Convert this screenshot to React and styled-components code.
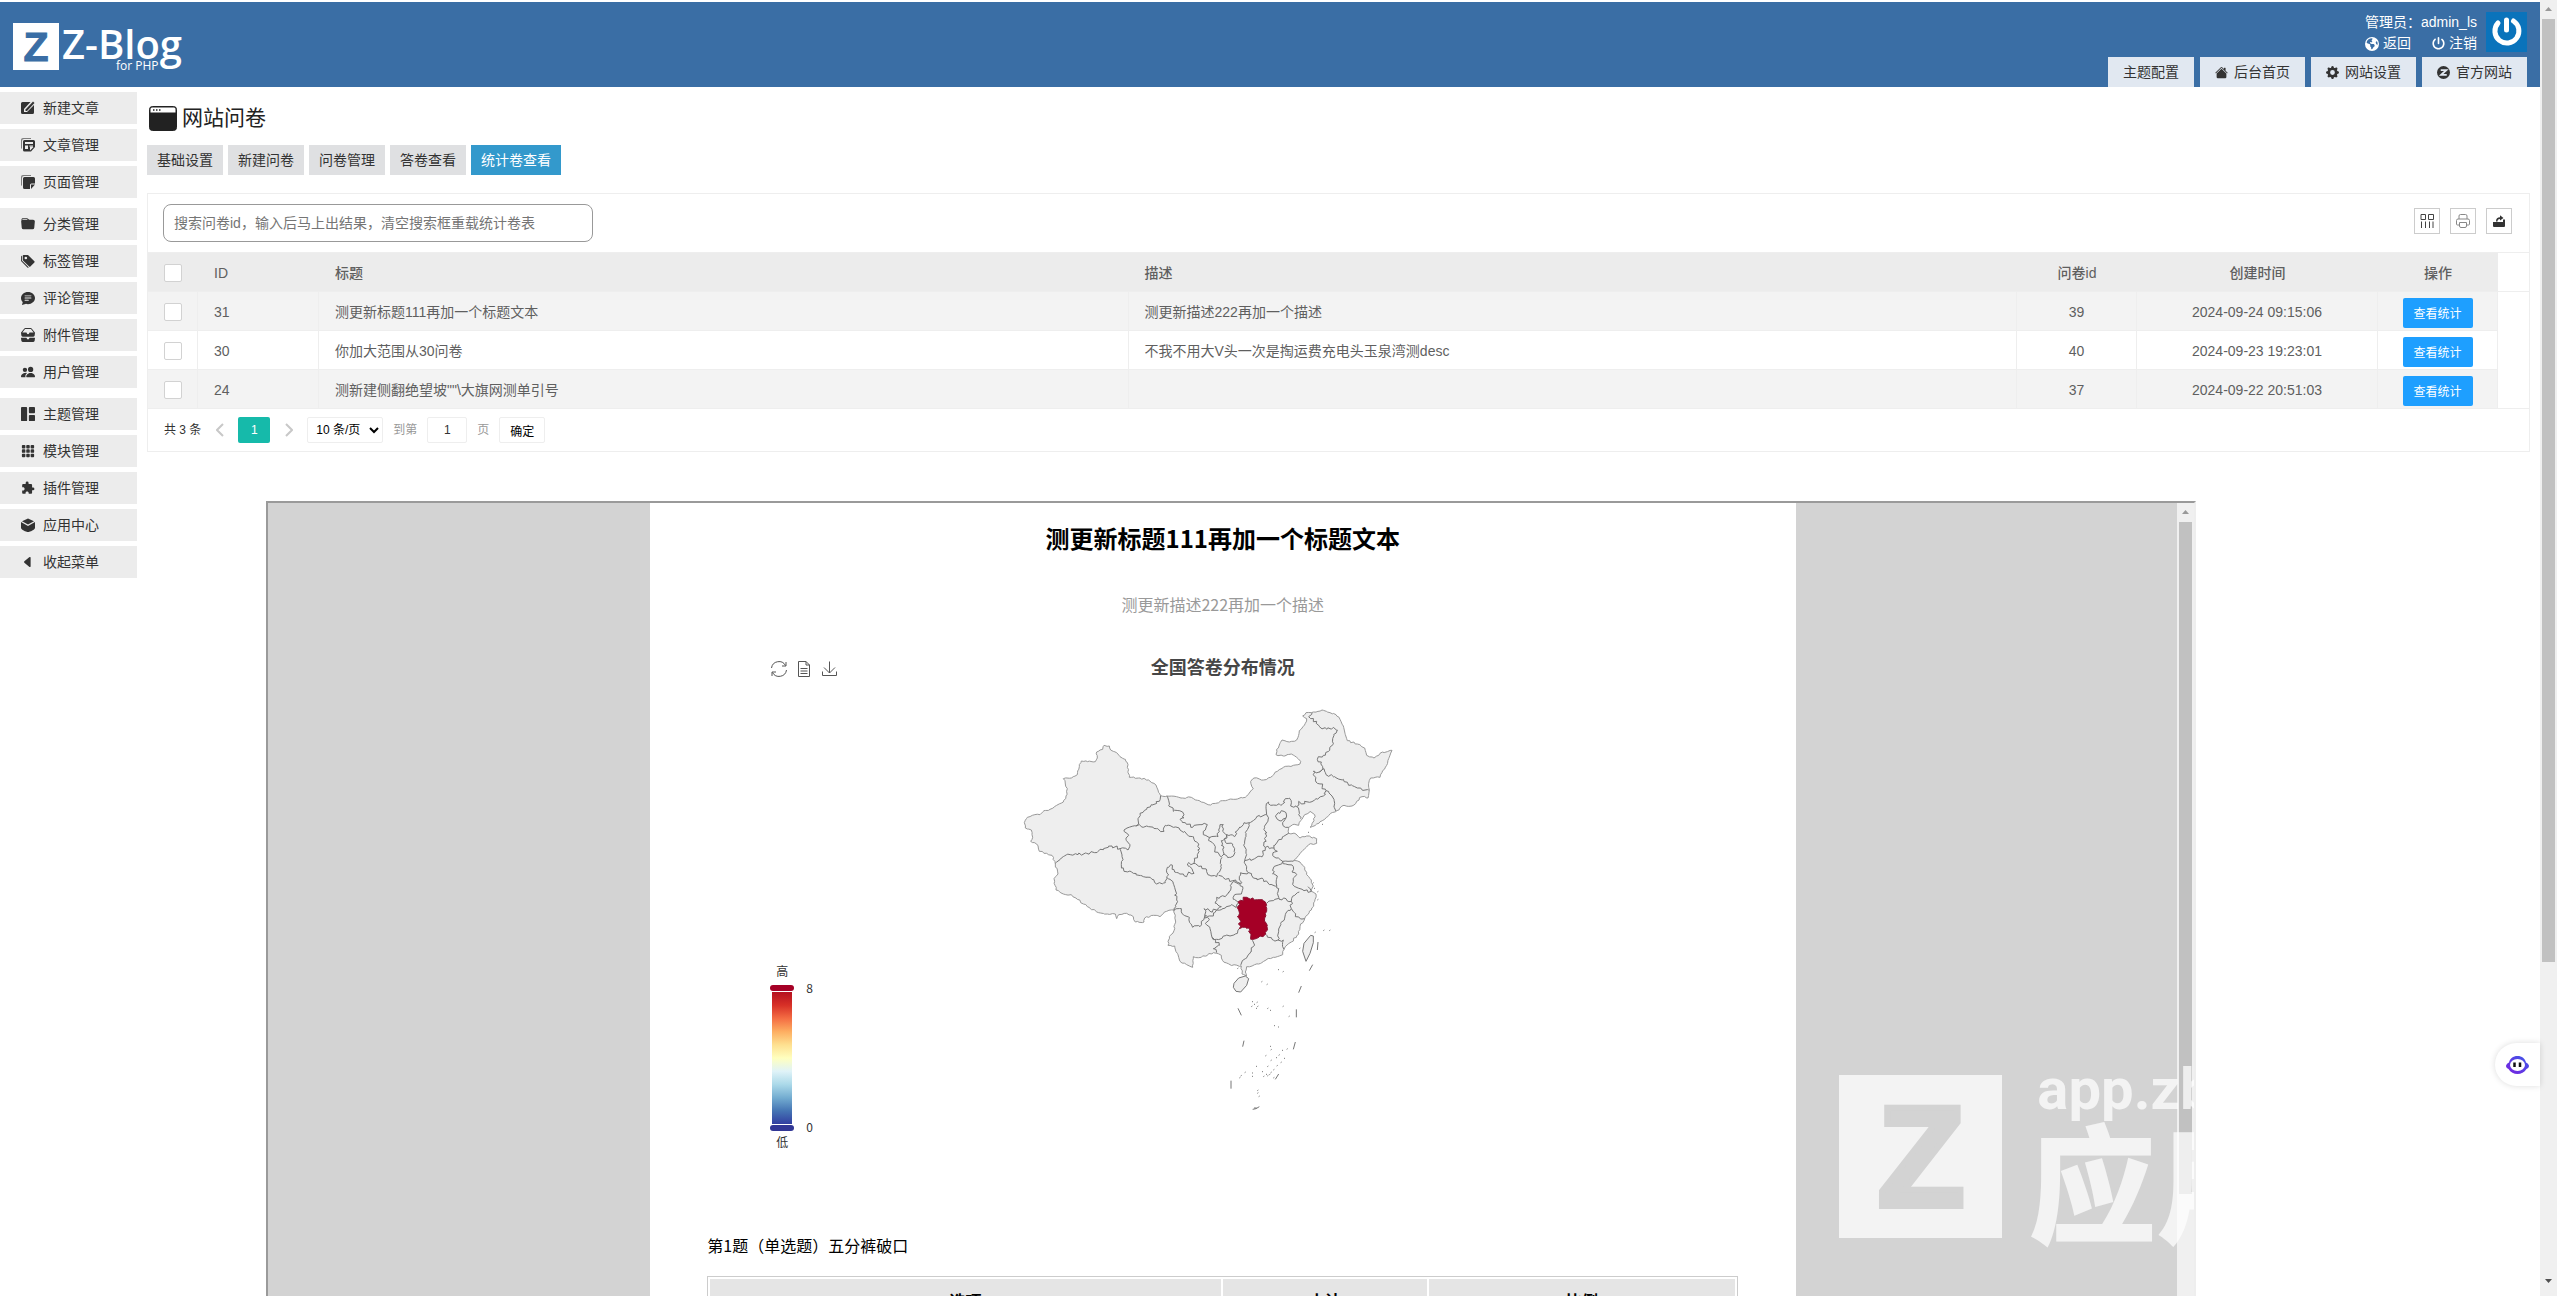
import React from 'react';
import styled, { createGlobalStyle } from 'styled-components';
import {
  BsCaretLeftFill,
  BsChatTextFill,
  BsFolderFill,
  BsGearFill,
  BsGrid1X2Fill,
  BsGrid3X3GapFill,
  BsHouseFill,
  BsInboxesFill,
  BsPeopleFill,
  BsStickyFill,
  BsTagsFill,
} from 'react-icons/bs';
import { FaEarthAmericas, FaPowerOff } from 'react-icons/fa6';
import { MdExtension } from 'react-icons/md';

const GlobalStyle = createGlobalStyle`
  * {
    box-sizing: border-box;
  }
  body {
    margin: 0;
    background: #fff;
    color: #333;
    font: 14px/20px "Liberation Sans", "Noto Sans CJK SC", sans-serif;
  }
  button, input, select {
    font-family: inherit;
  }
  svg {
    display: block;
    flex: none;
  }
`;

const Window = styled.div`
  display: flex;
  height: 100vh;
  overflow: hidden;
`;
const Page = styled.div`
  display: flex;
  flex-direction: column;
  flex: 1;
  min-width: 0;
  padding-top: 2px;
`;

/* scrollbars */
const Track = styled.div`
  flex: none;
  display: flex;
  flex-direction: column;
  justify-content: space-between;
  align-items: center;
  width: 17px;
  padding: 0 2px 5px;
  background: #f0f0f0;
`;
const Thumb = styled.div`
  width: 13px;
  height: ${(p) => p.$size};
  background: #c1c1c1;
`;
const Arrow = styled.svg`
  width: 7px;
  height: 4px;
  margin: 7px auto 8px;
  fill: ${(p) => p.$color};
`;

/* top bar */
const Header = styled.header`
  flex: none;
  display: flex;
  justify-content: space-between;
  height: 85px;
  padding: 0 13px;
  background: #3a6ea5;
`;
const Logo = styled.svg`
  width: 180px;
  height: 60px;
  margin-top: 15px;
`;
const HeaderRight = styled.div`
  display: flex;
  flex-direction: column;
  align-items: flex-end;
  justify-content: space-between;
`;
const User = styled.div`
  display: flex;
  gap: 9px;
  padding-top: 10px;
  color: #fff;
  line-height: 21px;
`;
const UserLinks = styled.div`
  display: flex;
  justify-content: space-between;
`;
const UserLink = styled.a`
  display: flex;
  align-items: center;
  gap: 4px;
  color: #fff;
  text-decoration: none;
`;
const Avatar = styled.svg`
  width: 41px;
  height: 40px;
`;
const TopMenu = styled.nav`
  display: flex;
  gap: 6px;
`;
const TopLink = styled.a`
  display: flex;
  align-items: center;
  gap: 6px;
  height: 30px;
  padding: 0 15px;
  background: #e1e8f1;
  color: #333;
  text-decoration: none;
`;

/* left menu */
const Body = styled.div`
  display: flex;
  flex: 1;
  min-height: 0;
`;
const Side = styled.nav`
  flex: none;
  width: 137px;
  padding-top: 5px;
`;
const SideGroup = styled.div`
  display: flex;
  flex-direction: column;
  gap: 5px;
  margin-bottom: 10px;
`;
const SideLink = styled.a`
  display: flex;
  align-items: center;
  gap: 8px;
  height: 32px;
  padding-left: 21px;
  background: #ececec;
  color: #333;
  text-decoration: none;
`;

/* main column */
const Main = styled.main`
  display: flex;
  flex-direction: column;
  flex: 1;
  min-width: 0;
  padding: 16px 10px 0;
`;
const PageTitle = styled.h2`
  display: flex;
  align-items: center;
  gap: 5px;
  margin: 0;
  padding-left: 2px;
  font-size: 21px;
  font-weight: 400;
  line-height: 30px;
  color: #222;
`;
const Tabs = styled.div`
  display: flex;
  gap: 5px;
  margin-top: 12px;
`;
const Tab = styled.a`
  padding: 0 10px;
  background: ${(p) => (p.$active ? '#3399cc' : '#dfe0e2')};
  color: ${(p) => (p.$active ? '#fff' : '#333')};
  line-height: 30px;
  text-decoration: none;
`;
const Panel = styled.section`
  margin-top: 18px;
  border: 1px solid #eee;
`;
const Tools = styled.div`
  display: flex;
  justify-content: space-between;
  align-items: center;
  height: 58px;
  padding: 0 17px 0 15px;
`;
const Search = styled.input`
  width: 430px;
  height: 38px;
  padding: 0 10px;
  border: 1px solid #999;
  border-radius: 8px;
  font-size: 14px;
  &::placeholder {
    color: #757575;
  }
`;
const ToolButtons = styled.div`
  display: flex;
  gap: 10px;
  margin-bottom: 5px;
`;
const ToolButton = styled.button`
  display: flex;
  align-items: center;
  justify-content: center;
  width: 26px;
  height: 26px;
  padding: 0;
  border: 1px solid #ccc;
  background: #fff;
`;

const Table = styled.table`
  width: 100%;
  table-layout: fixed;
  border-collapse: separate;
  border-spacing: 0;
  border-top: 1px solid #eee;
  border-bottom: 1px solid #eee;
  color: #5f5f5f;
`;
const Th = styled.th`
  height: 39px;
  padding: 1px 16px 0;
  border-bottom: 1px solid #eee;
  background: ${(p) => (p.$patch ? '#fff' : '#ececec')};
  font-weight: 500;
  text-align: ${(p) => (p.$center ? 'center' : 'left')};
`;
const Td = styled.td`
  height: 39px;
  padding: 1px 16px 0;
  border-right: 1px solid #eee;
  border-bottom: 1px solid #eee;
  text-align: ${(p) => (p.$center ? 'center' : 'left')};
`;
const Patch = styled.td`
  padding: 0;
  background: #fff;
`;
const Row = styled.tr`
  background: ${(p) => (p.$even ? '#fff' : '#f3f3f3')};
  &:last-child td {
    height: 38px;
    border-bottom: 0;
  }
`;
const Check = styled.input`
  appearance: none;
  display: block;
  width: 18px;
  height: 18px;
  margin: 0;
  border: 1px solid #d2d2d2;
  border-radius: 2px;
  background: #fff;
`;
const ViewButton = styled.button`
  display: block;
  width: 70px;
  height: 30px;
  margin: 2px auto 0;
  padding: 0;
  border: 0;
  border-radius: 2px;
  background: #1e9fff;
  color: #fff;
  font-size: 12px;
`;

const Pager = styled.div`
  display: flex;
  align-items: center;
  height: 42px;
  padding-left: 16px;
  font-size: 12px;
`;
const Chevron = styled.button`
  width: 37px;
  padding: 0;
  border: 0;
  background: none;
  svg {
    margin: 0 auto;
    fill: none;
    stroke: #c8c8c8;
    stroke-width: 2;
  }
`;
const PageNow = styled.button`
  width: 32px;
  height: 26px;
  border: 0;
  border-radius: 2px;
  background: #16baaa;
  color: #fff;
  font-size: 12px;
`;
const PagerSelect = styled.select`
  width: 76px;
  height: 26px;
  padding: 0 4px;
  border: 1px solid #eee;
  border-radius: 2px;
  background: #fff;
  color: #000;
  font-size: 12px;
`;
const PagerLabel = styled.label`
  display: flex;
  align-items: center;
  gap: 10px;
  margin: 0 10px;
  color: #999;
`;
const PagerInput = styled.input`
  width: 40px;
  height: 26px;
  padding: 0;
  border: 1px solid #eee;
  border-radius: 2px;
  color: #333;
  font-size: 12px;
  text-align: center;
`;
const PagerGo = styled.button`
  width: 46px;
  height: 26px;
  padding: 0;
  border: 1px solid #eee;
  border-radius: 2px;
  background: #fff;
  color: #000;
  font-size: 12px;
`;

/* survey preview */
const Frame = styled.section`
  position: relative;
  display: flex;
  flex: 1;
  min-height: 0;
  width: 81%;
  margin: 49px 0 0 5%;
  border: 2px solid #9a9a9a;
  border-right-color: #eee;
  border-bottom: 0;
  overflow: hidden;
`;
const FrameBody = styled.div`
  flex: 1;
  overflow: hidden;
  background: #d3d3d3;
  color: #000;
  font-family: "Noto Sans CJK SC", sans-serif;
`;
const Paper = styled.article`
  width: 60%;
  min-height: 100%;
  margin: 0 auto;
  padding: 19px 3% 0;
  background: #fff;
`;
const SurveyTitle = styled.h1`
  margin: 0;
  font-size: 24px;
  line-height: 32px;
  text-align: center;
`;
const SurveyDesc = styled.p`
  margin: 38px 0;
  color: #999;
  font-size: 16px;
  line-height: 24px;
  text-align: center;
`;
const ChartHead = styled.div`
  display: grid;
  grid-template-columns: 1fr auto 1fr;
  align-items: center;
  height: 24px;
`;
const Toolbox = styled.div`
  display: flex;
  gap: 7px;
  padding: 6px 0 0 63px;
  svg {
    width: 18px;
    height: 18px;
    fill: none;
    stroke: #555;
  }
`;
const ChartTitle = styled.h3`
  margin: 0;
  color: #464646;
  font-size: 18px;
  line-height: 24px;
`;
const ChartBody = styled.div`
  display: grid;
  grid-template-columns: 293fr 420px 318fr;
  height: 500px;
  padding-top: 12px;
`;
const Legend = styled.div`
  display: grid;
  grid-template-columns: 24px 24px;
  column-gap: 12px;
  align-content: end;
  height: 460px;
  padding-left: 63px;
  font-size: 12px;
  line-height: 16px;
  color: #333;
`;
const LegendLabel = styled.span`
  grid-column: 1 / 2;
  text-align: center;
`;
const LegendBar = styled.div`
  grid-column: 1 / 2;
  display: flex;
  flex-direction: column;
  align-items: center;
  gap: 1px;
  margin: 6px 0 3px;
`;
const Handle = styled.i`
  width: 24px;
  height: 6px;
  border-radius: 3px;
  background: ${(p) => p.$color};
`;
const Gradient = styled.div`
  width: 20px;
  height: 132px;
  background: linear-gradient(#b5101f, #d73027, #f46d43, #fdae61, #fee090, #ffffbf, #e0f3f8, #abd9e9, #74add1, #4575b4, #313ea0);
`;
const Ticks = styled.div`
  grid-column: 2 / 3;
  display: flex;
  flex-direction: column;
  justify-content: space-between;
  margin: 1px 0 -1px;
`;
const ChinaMap = styled.svg`
  width: 420px;
  height: 440px;
`;
const Question = styled.p`
  margin: 55px 0 19px;
  font-size: 16px;
  line-height: 24px;
`;
const AnswerTable = styled.table`
  width: 100%;
  table-layout: fixed;
  border: 1px solid #ccc;
  border-spacing: 2px;
`;
const AnswerTh = styled.th`
  width: ${(p) => p.$w};
  height: 42px;
  padding: 0;
  background: #e5e5e5;
  font-size: 16px;
`;

const Watermark = styled.div`
  position: absolute;
  right: 0;
  bottom: 43px;
  display: flex;
  align-items: flex-start;
  width: 355px;
  height: 200px;
  overflow: hidden;
  color: rgba(255, 255, 255, 0.72);
  white-space: nowrap;
  pointer-events: none;
`;
const WatermarkLogo = styled.svg`
  width: 163px;
  height: 163px;
  margin-top: 22px;
`;
const WatermarkText = styled.div`
  padding-left: 26px;
`;
const WatermarkUrl = styled.div`
  padding-left: 9px;
  font: 700 58px/72px Roboto, sans-serif;
`;
const WatermarkName = styled.div`
  font: 900 128px/108px "Noto Sans CJK SC", sans-serif;
`;

const Assistant = styled.button`
  position: fixed;
  right: 17px;
  bottom: 210px;
  display: flex;
  align-items: center;
  width: 45px;
  height: 43px;
  padding: 0 11px;
  border: 0;
  border-radius: 22px 0 0 22px;
  background: #fff;
  box-shadow: 0 0 6px rgba(0, 0, 0, 0.14);
`;

const SIDE = [
  [
    ['新建文章', EditIcon],
    ['文章管理', ArticleIcon],
    ['页面管理', PageIcon],
  ],
  [
    ['分类管理', BsFolderFill],
    ['标签管理', BsTagsFill],
    ['评论管理', BsChatTextFill],
    ['附件管理', BsInboxesFill],
    ['用户管理', BsPeopleFill],
  ],
  [
    ['主题管理', BsGrid1X2Fill],
    ['模块管理', BsGrid3X3GapFill],
    ['插件管理', MdExtension],
    ['应用中心', AppIcon],
    ['收起菜单', BsCaretLeftFill],
  ],
];

const TABS = ['基础设置', '新建问卷', '问卷管理', '答卷查看', '统计卷查看'];

const ROWS = [
  { id: 31, title: '测更新标题111再加一个标题文本', desc: '测更新描述222再加一个描述', qid: 39, time: '2024-09-24 09:15:06' },
  { id: 30, title: '你加大范围从30问卷', desc: '不我不用大V头一次是掏运费充电头玉泉湾测desc', qid: 40, time: '2024-09-23 19:23:01' },
  { id: 24, title: '测新建侧翻绝望坡""\\大旗网测单引号', desc: '', qid: 37, time: '2024-09-22 20:51:03' },
];

// map outline and province borders, x y pairs on a 1260 x 1320 board
const LAND =
  '73 398 82 382 97 376 120 374 132 362 150 358 170 346 190 336 198 318 202 296 196 282 190 266 214 264 232 254 238 230 244 213 262 215 286 215 292 204 290 186 300 180 308 178 312 166 328 168 332 180 350 188 360 200 376 208 384 224 384 244 388 262 420 264 446 270 462 280 474 300 482 317 500 318 548 324 574 322 604 336 632 345 668 332 700 328 736 322 750 306 760 296 752 274 762 264 790 270 812 262 832 244 850 232 880 226 900 222 902 214 890 202 874 192 850 198 828 194 830 178 846 150 868 156 890 150 898 122 916 100 920 86 908 78 918 68 940 66 966 60 990 68 1008 74 1020 88 1030 108 1036 134 1042 152 1072 162 1094 174 1100 196 1122 204 1140 190 1176 181 1166 206 1160 226 1148 242 1140 262 1112 264 1106 280 1108 300 1104 324 1086 320 1070 334 1056 348 1032 346 1010 362 992 370 974 388 950 402 930 412 942 392 944 374 930 364 914 374 906 388 896 406 878 404 866 412 866 430 888 432 900 444 920 438 950 446 950 460 926 464 904 486 880 512 900 516 914 532 920 554 934 570 940 588 934 604 948 612 944 634 934 660 914 686 900 710 896 732 874 756 852 778 848 794 820 802 798 810 776 822 740 830 736 846 740 858 726 852 724 828 690 824 668 812 664 796 650 790 640 788 604 802 580 800 578 832 560 824 540 814 532 790 524 768 504 766 508 740 522 722 526 690 522 660 500 664 480 680 460 676 434 684 432 696 406 696 400 680 380 670 356 674 350 686 346 672 322 672 296 668 262 650 232 628 214 614 190 612 168 600 162 566 174 552 166 522 156 496 140 490 118 484 110 462 92 454 98 442 94 420 76 414 73 398';
const BORDERS = [
  '482 317 478 334 454 344 440 358 420 370 414 386 416 402 408 408 372 420 386 436 378 448 388 462 384 480 360 476 336 468 300 478 284 488 260 490 234 494 200 494 184 504 166 520',
  '360 476 366 500 364 524 372 544 400 550 430 560 456 568 470 582 496 578 502 564',
  '502 564 520 576 526 600 530 630 528 650 522 662',
  '408 408 440 408 470 416 492 424 496 406 520 412 540 420 560 432 580 440 590 456 600 476 592 494 584 510 582 520',
  '502 564 502 532 512 524 524 546 550 552 560 560 566 546 582 550 576 536 562 522 582 520',
  '582 520 604 528 620 540 630 556 650 560 656 548 664 524 666 502',
  '500 318 506 346 520 364 548 366 552 384 540 388 556 398 578 412 606 404 622 404 616 420 610 434 630 442 626 452 646 470 644 486 664 500',
  '630 442 654 440 656 420 660 404 670 404 668 424 680 434 676 444 664 452 664 466 672 474 672 492 664 500',
  '680 434 676 456 698 462 704 476 700 498 688 502 672 492',
  '680 434 704 440 712 422 730 404 748 398',
  '748 398 738 430 734 460 738 490 734 512',
  '748 398 770 380 800 374 798 350 806 336 812 346 848 342 856 326 868 324 872 348 890 350 896 334 904 342 924 336 948 326 970 318 978 302',
  '800 374 804 390 794 412 800 438 792 456 796 472',
  '734 512 764 506 790 494 796 472 822 474',
  '822 474 832 456 848 440 866 430',
  '822 474 832 484 818 496 828 504 848 514 864 514 880 514',
  '828 376 844 362 858 368 858 384 846 392 832 388 828 376',
  '858 384 848 402 856 412 866 412',
  '890 350 896 374 902 386',
  '978 302 996 318 1004 340 1008 364',
  '978 302 966 296 968 282 948 276 940 244 958 246 972 236 978 254 1004 260 1030 268 1046 286 1064 290 1072 294 1106 300',
  '958 246 968 230 964 216 952 208 970 196 986 184 1000 160 1002 136 1012 120 1000 112 980 118 958 110 950 94 932 86 926 80 936 68',
  '734 512 740 530 746 548 722 548 718 560 724 580',
  '746 548 760 564 790 568 810 584 830 586',
  '848 514 822 530 818 552 832 558 830 586 834 606 838 628 858 626 874 634',
  '848 514 864 524 880 530 876 546 890 554 880 574 884 590 912 602 934 604',
  '924 590 934 604',
  '874 634 884 616 898 606',
  '800 640 820 632 838 628',
  '874 634 874 656 856 674 842 700 836 720 834 750',
  '874 656 886 680 914 686',
  '800 734 816 748 834 750 850 750 852 778',
  '718 716 706 732 690 738 670 738 650 748 636 742 630 716 616 700 628 688 614 684 616 676 640 678 650 660 676 654 694 644 708 652 714 640',
  '522 660 544 656 550 674 568 682 578 712 600 710 604 694 614 676 612 656 624 656 630 664 650 660',
  '650 660 664 650 646 640 650 622 676 620 692 600 698 576 720 580 728 590 724 612 704 614 700 628 714 636',
  '656 556 676 568 698 572 724 580',
  '636 742 658 766 640 776 650 788',
  '760 748 760 770 748 792 736 806 722 826',
];
const HUNAN =
  '714 636 740 622 762 630 790 632 800 646 800 664 794 684 802 706 798 732 780 738 760 748 752 740 746 714 718 716 720 690 712 680 716 660 714 636';
const HAINAN = 'M702 880L716 864L736 858L746 866L740 886L722 906L708 904L700 892Z';
const TAIWAN = 'M940 738L932 736L912 760L908 784L918 814L930 790L940 758Z';
const DASHES =
  'M954 756L952 780M938 824L928 842M904 888L896 908M889 958V982M714 955L724 976M732 1052L728 1070M886 1056L880 1078M693 1172V1196M836 1152L826 1168M758 1258L768 1256L778 1250M762 1254H770';
const ISLETS = [
  [756, 936], [762, 944], [770, 938], [754, 950], [768, 956], [772, 950], [802, 956], [810, 962], [848, 950], [866, 980],
  [834, 840], [848, 846], [784, 876], [800, 884], [944, 728], [970, 722], [988, 722], [898, 776], [822, 1008], [834, 1012],
  [810, 1070], [812, 1080], [860, 1078], [846, 1082], [796, 1098], [828, 1104], [836, 1096], [852, 1106], [812, 1112], [842, 1118],
  [768, 1130], [802, 1130], [820, 1140], [812, 1148], [734, 1148], [722, 1158], [718, 1164], [756, 1150], [786, 1146], [798, 1154],
  [802, 1158], [808, 1154], [820, 1164], [772, 1202], [772, 1210], [776, 1220], [756, 1160], [830, 1128], [790, 1160], [712, 836],
  [952, 606], [952, 630], [966, 404], [924, 428], [942, 596], [938, 580],
];

// splits every leg in short steps and nudges them, so the borders look surveyed
function rough(text, amount = 4) {
  const n = text.split(' ').map(Number);
  let d = `M${n[0]} ${n[1]}`;
  for (let i = 2; i < n.length; i += 2) {
    const [x0, y0, x1, y1] = [n[i - 2], n[i - 1], n[i], n[i + 1]];
    const steps = Math.max(1, Math.round(Math.hypot(x1 - x0, y1 - y0) / 7));
    for (let s = 1; s < steps; s++) {
      const x = x0 + ((x1 - x0) * s) / steps;
      const y = y0 + ((y1 - y0) * s) / steps;
      const dx = Math.sin(x * 12.9 + y * 7.2) * amount;
      const dy = Math.sin(x * 4.1 + y * 17.7) * amount;
      d += `L${(x + dx).toFixed(1)} ${(y + dy).toFixed(1)}`;
    }
    d += `L${x1} ${y1}`;
  }
  return d;
}

function EditIcon() {
  return (
    <svg width="14" height="14" viewBox="0 0 14 14" fill="#333">
      <path d="M1.500 1H9.500L3 8V11H6L13 4V11.500A1.500 1.500 0 0 1 11.500 13H1.500A1.500 1.500 0 0 1 0 11.500V2.500A1.500 1.500 0 0 1 1.500 1z" />
      <path d="M4.500 8.500L12 .5L13.500 2L6 10H4.500z" />
    </svg>
  );
}

function ArticleIcon() {
  return (
    <svg width="14" height="14" viewBox="0 0 14 14" fill="#333">
      <path d="M0 2a2 2 0 0 1 2-2h8v1H3a2 2 0 0 0-2 2v8a2 2 0 0 1-1-2z" opacity=".6" />
      <path fillRule="evenodd" d="M2 3.500a1.500 1.500 0 0 1 1.500-1.500h9A1.500 1.500 0 0 1 14 3.500V9l-4 4.500H3.500A1.500 1.500 0 0 1 2 12zM4 4v2h8V4zM4 7.500v3.500h3V7.500zM8.500 7.500v1.200H12V7.500zM9 12.500L12.500 9H9z" />
    </svg>
  );
}

function PageIcon() {
  return (
    <svg width="14" height="14" viewBox="0 0 14 14" fill="#333">
      <path d="M0 2a2 2 0 0 1 2-2h8v1H3a2 2 0 0 0-2 2v8a2 2 0 0 1-1-2z" opacity=".6" />
      <path d="M2 3.500A1.500 1.500 0 0 1 3.500 2h9A1.500 1.500 0 0 1 14 3.500V8.500H10.500A1.500 1.500 0 0 0 9 10V14H3.500A1.500 1.500 0 0 1 2 12.500z" />
      <path d="M10 9.500H14L10 14z" />
    </svg>
  );
}

function AppIcon() {
  return (
    <svg width="14" height="14" viewBox="0 0 14 14" fill="#333">
      <path d="M7 .5L13 3.200L7 6.500L1 3.200z" />
      <path d="M0 4L7 8L14 4V10C14 11.500 9 14 7 14S0 11.500 0 10z" />
    </svg>
  );
}

function ScrollTrack({ size, down }) {
  return (
    <Track>
      <div>
        <Arrow viewBox="0 0 7 4" $color="#999">
          <path d="M0 4L3.500 0L7 4z" />
        </Arrow>
        <Thumb $size={size} />
      </div>
      {down && (
        <Arrow viewBox="0 0 7 4" $color="#505050">
          <path d="M0 0L3.500 4L7 0z" />
        </Arrow>
      )}
    </Track>
  );
}

function TopBar() {
  return (
    <Header>
      <Logo viewBox="0 0 180 60" role="img" aria-label="Z-Blog for PHP">
        <rect y="6" width="46" height="47" fill="#fff" />
        <text x="23" y="44" textAnchor="middle" fontFamily="Liberation Sans" fontWeight="700" fontSize="41" stroke="#3a6ea5" fill="#3a6ea5">Z</text>
        <text x="49" y="42" fontFamily="Open Sans" fontWeight="600" fontSize="40" fill="#fff">Z-Blog</text>
        <text x="103" y="53" fontFamily="Open Sans" fontSize="12" fill="#fff">for PHP</text>
      </Logo>
      <HeaderRight>
        <User>
          <div>
            管理员：admin_ls
            <UserLinks>
              <UserLink href="#back"><FaEarthAmericas size={14} />返回</UserLink>
              <UserLink href="#logout"><FaPowerOff size={13} />注销</UserLink>
            </UserLinks>
          </div>
          <Avatar viewBox="0 0 41 40">
            <rect width="41" height="40" fill="#0a73bb" />
            <path d="M12 11a12 12 0 1 0 15.500-2" fill="none" stroke="#fff" strokeWidth="5" strokeLinecap="round" />
            <path d="M20.500 8v10" stroke="#fff" strokeWidth="5" strokeLinecap="round" />
          </Avatar>
        </User>
        <TopMenu>
          <TopLink href="#theme">主题配置</TopLink>
          <TopLink href="#home"><BsHouseFill size={13} />后台首页</TopLink>
          <TopLink href="#setting"><BsGearFill size={13} />网站设置</TopLink>
          <TopLink href="#site">
            <svg width="13" height="13" viewBox="0 0 14 14">
              <circle cx="7" cy="7" r="7" fill="#333" />
              <path d="M4 4.500H10L4.500 9.500H10.500" fill="none" stroke="#e1e8f1" strokeWidth="2" />
            </svg>
            官方网站
          </TopLink>
        </TopMenu>
      </HeaderRight>
    </Header>
  );
}

function SideMenu() {
  return (
    <Side>
      {SIDE.map((group) => (
        <SideGroup key={group[0][0]}>
          {group.map(([name, Icon]) => (
            <SideLink key={name} href="#menu"><Icon size={14} />{name}</SideLink>
          ))}
        </SideGroup>
      ))}
    </Side>
  );
}

function DataPanel() {
  return (
    <Panel>
      <Tools>
        <Search aria-label="搜索问卷id" placeholder="搜索问卷id，输入后马上出结果，清空搜索框重载统计卷表" />
        <ToolButtons>
          <ToolButton aria-label="筛选列">
            <svg width="14" height="14" viewBox="0 0 14 14" fill="none" stroke="#444">
              <path d="M1 .5H5.500V5.500H1zM8.500 .5H13.500V5.500H8.500zM1.500 7.500V14M5.500 7.500V14M9.500 7.500V14M13 7.500V14" />
            </svg>
          </ToolButton>
          <ToolButton aria-label="打印">
            <svg width="14" height="14" viewBox="0 0 14 14" fill="none" stroke="#888">
              <path d="M3 5V2a1.500 1.500 0 0 1 1.500-1.500h5A1.500 1.500 0 0 1 11 2V5M3 11H1.500A1 1 0 0 1 .5 10V6.500A1.500 1.500 0 0 1 2 5H12a1.500 1.500 0 0 1 1.500 1.500V10a1 1 0 0 1-1 1H11M3.500 8.500h7v3.500a1.500 1.500 0 0 1-1.500 1.500H5A1.500 1.500 0 0 1 3.500 12z" />
            </svg>
          </ToolButton>
          <ToolButton aria-label="导出">
            <svg width="14" height="14" viewBox="0 0 14 14" fill="#333">
              <path d="M1 8h12v4a1 1 0 0 1-1 1H2a1 1 0 0 1-1-1z" />
              <path d="M4 7.500C4 4.500 5.500 3.200 8 3.200V1.200L11.500 4 8 6.500V5C6 5 5.500 6 5.500 7.500zM11 5.500h2V8h-2z" />
            </svg>
          </ToolButton>
        </ToolButtons>
      </Tools>
      <Table>
        <colgroup>
          <col width="50" />
          <col width="121" />
          <col width="34%" />
          <col />
          <col width="120" />
          <col width="241" />
          <col width="120" />
          <col width="31" />
        </colgroup>
        <thead>
          <tr>
            <Th><Check type="checkbox" aria-label="全选" /></Th>
            <Th>ID</Th>
            <Th>标题</Th>
            <Th>描述</Th>
            <Th $center>问卷id</Th>
            <Th $center>创建时间</Th>
            <Th $center>操作</Th>
            <Th $patch />
          </tr>
        </thead>
        <tbody>
          {ROWS.map((row, i) => (
            <Row key={row.id} $even={i % 2 === 1}>
              <Td><Check type="checkbox" aria-label={`${row.id}`} /></Td>
              <Td>{row.id}</Td>
              <Td>{row.title}</Td>
              <Td>{row.desc}</Td>
              <Td $center>{row.qid}</Td>
              <Td $center>{row.time}</Td>
              <Td $center><ViewButton>查看统计</ViewButton></Td>
              <Patch />
            </Row>
          ))}
        </tbody>
      </Table>
      <Pager>
        共 3 条
        <Chevron aria-label="上一页">
          <svg width="8" height="14" viewBox="0 0 8 14"><path d="M7 1L1 7L7 13" /></svg>
        </Chevron>
        <PageNow>1</PageNow>
        <Chevron aria-label="下一页">
          <svg width="8" height="14" viewBox="0 0 8 14"><path d="M1 1L7 7L1 13" /></svg>
        </Chevron>
        <PagerSelect aria-label="每页条数" defaultValue="10">
          <option value="10">10 条/页</option>
        </PagerSelect>
        <PagerLabel>
          到第
          <PagerInput defaultValue="1" />
          页
        </PagerLabel>
        <PagerGo>确定</PagerGo>
      </Pager>
    </Panel>
  );
}

function MapChart() {
  return (
    <>
      <ChartHead>
        <Toolbox>
          <svg viewBox="0 0 18 18">
            <path d="M1.500 8A7.500 7.500 0 0 1 15.500 5.500M16.500 10A7.500 7.500 0 0 1 2.500 12.500M16 2V6H12M2 16V12H6" />
          </svg>
          <svg viewBox="0 0 18 18">
            <path d="M3.500 1.500H11L14.500 5V16.500H3.500zM11 1.500V5H14.500M5.500 8.500H12.500M5.500 11H12.500M5.500 13.500H12.500" />
          </svg>
          <svg viewBox="0 0 18 18">
            <path d="M2.500 11.500V15.500H16.500V11.500M9.500 1.500V13M4 7.500L9.500 13L15 7.500" />
          </svg>
        </Toolbox>
        <ChartTitle>全国答卷分布情况</ChartTitle>
      </ChartHead>
      <ChartBody>
        <Legend>
          <LegendLabel>高</LegendLabel>
          <LegendBar>
            <Handle $color="#a50026" />
            <Gradient />
            <Handle $color="#313695" />
          </LegendBar>
          <Ticks>
            <span>8</span>
            <span>0</span>
          </Ticks>
          <LegendLabel>低</LegendLabel>
        </Legend>
        <ChinaMap viewBox="0 0 1260 1320" fill="none" stroke="#777" strokeWidth="3" strokeLinejoin="round">
          <path d={rough(LAND, 2)} fill="#eee" stroke="#999" />
          {BORDERS.map((line) => (
            <path key={line} d={rough(line)} />
          ))}
          <path d={rough(HUNAN)} fill="#a50026" stroke="#8a1030" />
          <path d={HAINAN} fill="#eee" />
          <path d={TAIWAN} fill="#eee" />
          <path d={DASHES} />
          <path d={ISLETS.map(([x, y]) => `M${x} ${y}l3 -2`).join('')} />
        </ChinaMap>
      </ChartBody>
    </>
  );
}

function SurveyFrame() {
  return (
    <Frame>
      <FrameBody>
        <Paper>
          <SurveyTitle>测更新标题111再加一个标题文本</SurveyTitle>
          <SurveyDesc>测更新描述222再加一个描述</SurveyDesc>
          <MapChart />
          <Question>第1题（单选题）五分裤破口</Question>
          <AnswerTable>
            <thead>
              <tr>
                <AnswerTh $w="50%">选项</AnswerTh>
                <AnswerTh $w="20%">小计</AnswerTh>
                <AnswerTh $w="30%">比例</AnswerTh>
              </tr>
            </thead>
          </AnswerTable>
        </Paper>
      </FrameBody>
      <ScrollTrack size="672px" />
      <Watermark>
        <WatermarkLogo viewBox="0 0 163 163">
          <rect width="163" height="163" fill="#fff" fillOpacity=".72" />
          <text x="82" y="131" textAnchor="middle" fontFamily="Liberation Sans" fontWeight="700" fontSize="142" stroke="#d3d3d3" strokeWidth="6" fill="#d3d3d3">Z</text>
        </WatermarkLogo>
        <WatermarkText>
          <WatermarkUrl>app.zblogcn.com</WatermarkUrl>
          <WatermarkName>应用中心</WatermarkName>
        </WatermarkText>
      </Watermark>
    </Frame>
  );
}

export default function App() {
  return (
    <Window>
      <GlobalStyle />
      <Page>
        <TopBar />
        <Body>
          <SideMenu />
          <Main>
            <PageTitle>
              <svg width="28" height="25" viewBox="0 0 28 25">
                <rect x=".5" y=".5" width="27" height="24" rx="3" fill="#222" stroke="#222" />
                <path d="M1.500 6.500V3a1.500 1.500 0 0 1 1.500-1.500H25A1.500 1.500 0 0 1 26.500 3V6.500z" fill="#fff" />
                <path d="M4 4h1.500M7 4h1.500M10 4h1.500" stroke="#222" strokeWidth="1.500" />
              </svg>
              网站问卷
            </PageTitle>
            <Tabs>
              {TABS.map((name, i) => (
                <Tab key={name} href="#tab" $active={i === TABS.length - 1}>{name}</Tab>
              ))}
            </Tabs>
            <DataPanel />
            <SurveyFrame />
          </Main>
        </Body>
      </Page>
      <ScrollTrack size="943px" down />
      <Assistant aria-label="助手">
        <svg width="23" height="18" viewBox="0 0 23 18">
          <defs>
            <linearGradient id="ring" x1="0" y1="1" x2="1" y2="0">
              <stop offset="0" stopColor="#7a1fe0" />
              <stop offset="1" stopColor="#3d5be8" />
            </linearGradient>
          </defs>
          <path d="M11.500 0C16 0 19 2.500 20 6.500C22 7.500 23 9 23 10C23 11.500 21.500 12.500 20.500 13C18.500 16.500 15 18 11.500 18S4.500 16.500 2.500 13C1.500 12.500 0 11.500 0 10C0 9 1 7.500 3 6.500C4 2.500 7 0 11.500 0z" fill="url(#ring)" />
          <ellipse cx="11.500" cy="9" rx="7.500" ry="6" fill="#fff" />
          <path d="M8.500 6.500V11M14 6.500V11" stroke="#111" strokeWidth="2.500" />
        </svg>
      </Assistant>
    </Window>
  );
}
